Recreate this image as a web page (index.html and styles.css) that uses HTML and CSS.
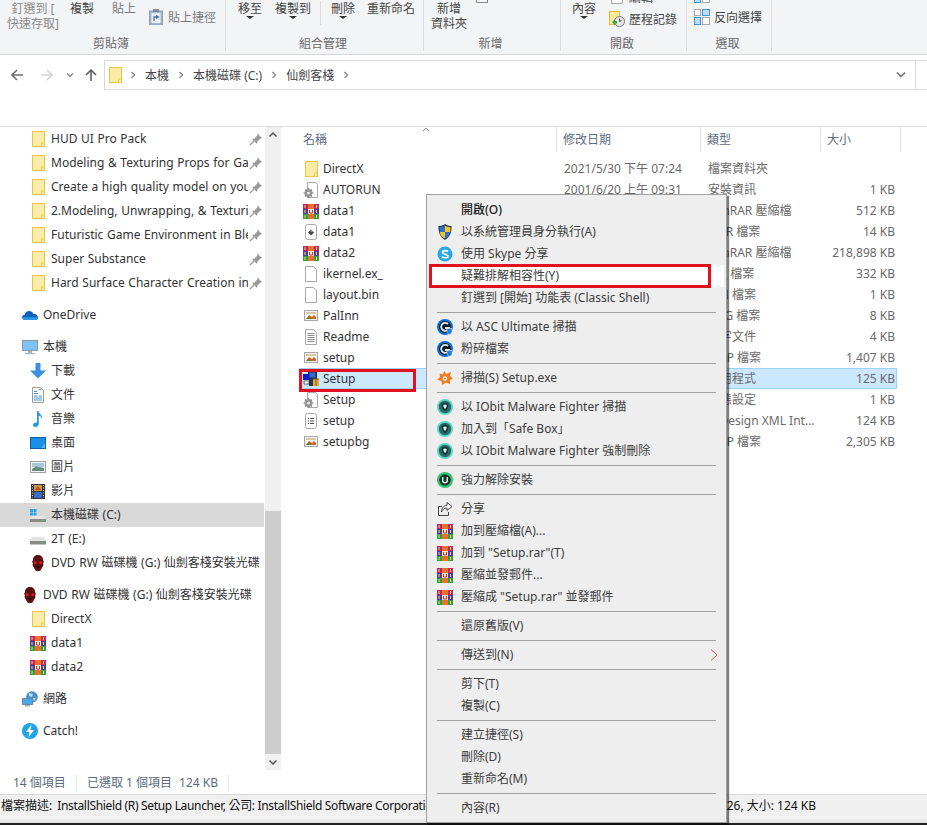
FILE: index.html
```html
<!DOCTYPE html>
<html lang="zh-Hant">
<head>
  <meta charset="UTF-8" />
  <title>仙劍客棧</title>
  <link rel="stylesheet" href="styles.css">
</head>
<body>
  <svg class="defs" xmlns="http://www.w3.org/2000/svg">
    <symbol id="folder" viewBox="0 0 16 16"><rect x="2.5" y="0.5" width="12" height="15" fill="#fdeca6" stroke="#ecc546"/><path d="M11.5 15v-3h3" fill="#fff6c8" stroke="#ecc546"/></symbol>
    <symbol id="rar" viewBox="0 0 16 16"><rect x="0" y="1" width="5" height="5" fill="#c2206a"/><rect x="5" y="1" width="6" height="5" fill="#e2722c"/><rect x="11" y="1" width="5" height="5" fill="#d0245e"/><rect x="0" y="6" width="5" height="5" fill="#4a3da6"/><rect x="5" y="6" width="6" height="5" fill="#f3e3d0"/><rect x="11" y="6" width="5" height="5" fill="#4a3da6"/><rect x="0" y="11" width="5" height="5" fill="#2f9e44"/><rect x="5" y="11" width="6" height="5" fill="#e2722c"/><rect x="11" y="11" width="5" height="5" fill="#2f9e44"/><path d="M6.5 7v3h3V7" fill="none" stroke="#c0392b"/><path d="M2 2v3M2 7v3M2 12v3M13.500 2v3M13.500 7v3M13.500 12v3" stroke="#f4e04d"/></symbol>
    <symbol id="docgear" viewBox="0 0 16 16"><path d="M4.500 .5h8l2 2v13h-10z" fill="#fff" stroke="#a8a8a8"/><circle cx="5.500" cy="11" r="4" fill="#a0a0a0"/><circle cx="5.500" cy="11" r="1.600" fill="#e8e8e8"/><path d="M5.500 6v10M.5 11h10M2 7.500l7 7M9 7.500l-7 7" stroke="#8c8c8c" stroke-width="1.200"/><circle cx="5.500" cy="11" r="1.600" fill="#e8e8e8"/></symbol>
    <symbol id="docdark" viewBox="0 0 16 16"><rect x="2.500" y=".5" width="11" height="15" rx="2" fill="#fff" stroke="#a8a8a8"/><path d="M5 8.500l3-3 3 3-3 3z" fill="#444"/><path d="M8 5.500l2 2-2 1z" fill="#999"/></symbol>
    <symbol id="docblank" viewBox="0 0 16 16"><path d="M2.500 .5h8l3 3v12h-11z" fill="#fff" stroke="#a8a8a8"/></symbol>
    <symbol id="doctext" viewBox="0 0 16 16"><path d="M2.500 .5h8l3 3v12h-11z" fill="#fff" stroke="#a8a8a8"/><path d="M4.500 4.500h7M4.500 6.500h7M4.500 8.500h7M4.500 10.500h7M4.500 12.500h7" stroke="#8a8a8a"/></symbol>
    <symbol id="doclist" viewBox="0 0 16 16"><rect x="2.500" y=".5" width="11" height="15" rx="2" fill="#fff" stroke="#a8a8a8"/><path d="M5 5.500h1M5 8h1M5 10.500h1M7 5.500h4M7 8h4M7 10.500h4" stroke="#444"/></symbol>
    <symbol id="bmp" viewBox="0 0 16 16"><rect x="1.500" y="2.500" width="13" height="10" fill="#f4f4f4" stroke="#a8a8a8"/><path d="M3 11l3-4 3 2 2-2 2 2v2z" fill="#d9622b"/><path d="M3 11l3-2 3 2z" fill="#4a8a4a"/><rect x="3" y="4" width="10" height="2" fill="#d8c9a0"/></symbol>
    <symbol id="setup" viewBox="0 0 16 16"><rect x="5" y="0" width="9" height="8" fill="#1d2a55"/><rect x="6.500" y="1.500" width="6" height="5" fill="#2c6fd1"/><rect x="0" y="3" width="6" height="6" fill="#0a1ed0"/><path d="M1 10h5v3H1z" fill="#fff" stroke="#333" stroke-width=".7"/><rect x="6" y="8" width="4" height="7" fill="#26344f"/><rect x="10" y="8" width="6" height="7" fill="#e2a93b"/><path d="M10 8h6M13 8v7" stroke="#8a5a12"/></symbol>
    <symbol id="pin" viewBox="0 0 16 16"><path d="M9 2l5 5-1.500.5-3 3-.5 2.500-5-5 2.500-.5 3-3z" fill="#9a9a9a"/><path d="M6 10l-4 4" stroke="#9a9a9a" stroke-width="1.200"/></symbol>
    <symbol id="cloud" viewBox="0 0 16 16"><path d="M3.500 13C1.500 13 0 11.700 0 10.200 0 8.700 1.300 7.700 2.700 7.700 3.300 5.600 5 4 7.200 4c1.900 0 3.400 1 4.100 2.700C13.700 6.700 16 8.300 16 10.500c0 1.500-1 2.500-2.500 2.500z" fill="#0f62b8"/><path d="M3.500 13c-2 0-3.500-1.300-3.500-2.800h16c0 1.800-1 2.800-2.500 2.800z" fill="#2a9be8"/></symbol>
    <symbol id="pc" viewBox="0 0 16 16"><rect x=".5" y="1.500" width="15" height="10" fill="#7cc4f2" stroke="#8a9aa8"/><rect x="6" y="12" width="4" height="2" fill="#a8b4be"/><rect x="3" y="14" width="10" height="1.200" fill="#a8b4be"/></symbol>
    <symbol id="down" viewBox="0 0 16 16"><path d="M5.500 0h5v7.500H16L8 15.500 0 7.500h5.500z" fill="#3c8ee0"/></symbol>
    <symbol id="docs" viewBox="0 0 16 16"><path d="M2.500 .5h8l3 3v12h-11z" fill="#fff" stroke="#9a9a9a"/><path d="M4 4.500h3M4 6.500h4M9 9h3M4 9h4M4 11h8M4 13h8" stroke="#3f93e0"/><path d="M8.500 2.500h3" stroke="#8a8a8a"/></symbol>
    <symbol id="music" viewBox="0 0 16 16"><path d="M7 0h1.500c.3 3 4 3.500 3.500 8-.5-2-2-3-3.200-3.200V13c0 1.700-1.600 3-3.300 3S3 15 3 13.700s1.500-2.400 4-2.200z" fill="#2a97ee"/></symbol>
    <symbol id="desk" viewBox="0 0 16 16"><rect x=".5" y="2.500" width="15" height="11" fill="#1a8fe8" stroke="#0a5fa8"/><path d="M12 12l3-4v5h-3z" fill="#5db8f5"/></symbol>
    <symbol id="pics" viewBox="0 0 16 16"><rect x=".5" y="2.500" width="15" height="11" fill="#eef4f6" stroke="#a0a0a0"/><rect x="2" y="4" width="12" height="4" fill="#a8c8d8"/><path d="M2 10l4-2.500 8 1.500v3H2z" fill="#5f8f78"/></symbol>
    <symbol id="film" viewBox="0 0 16 16"><rect x="1" y="1" width="14" height="15" fill="#333"/><rect x="4" y="2" width="8" height="6" fill="#c99a3a"/><rect x="4" y="9" width="8" height="6" fill="#3a6fc9"/><path d="M2.500 2v13M13.500 2v13" stroke="#ccc" stroke-dasharray="1 1.500"/><path d="M5 7l3-4 3 4z" fill="#c0442a"/></symbol>
    <symbol id="drivewin" viewBox="0 0 16 16"><rect x="0" y="2" width="3" height="3" fill="#2aa0ee"/><rect x="3.500" y="2" width="3" height="3" fill="#2aa0ee"/><rect x="0" y="5.500" width="3" height="3" fill="#2aa0ee"/><rect x="3.500" y="5.500" width="3" height="3" fill="#2aa0ee"/><path d="M2 9h12l2 3v3H0v-3z" fill="#e4e4e4"/><rect x="0" y="12" width="16" height="3" fill="#8a8a8a"/><rect x="11" y="13" width="2" height="1" fill="#3fd05a"/></symbol>
    <symbol id="drive" viewBox="0 0 16 16"><path d="M2 6h12l2 3v4H0V9z" fill="#e4e4e4"/><rect x="0" y="10" width="16" height="3.500" fill="#8a8a8a"/><rect x="11" y="11" width="2" height="1" fill="#3fd05a"/></symbol>
    <symbol id="mask" viewBox="0 0 16 16"><path d="M8 0c3 0 5 2 5 5l1 2-1 1 .5 2-1.500 3-2 3H6l-2-3-1.500-3L3 8 2 7l1-2c0-3 2-5 5-5z" fill="#5a1010"/><path d="M4 6l3 1-1 2H4zM12 6l-3 1 1 2h2z" fill="#e01818"/><path d="M6 11h4l-1 2H7z" fill="#2a0505"/></symbol>
    <symbol id="net" viewBox="0 0 16 16"><circle cx="10" cy="6" r="5.800" fill="#4a90c8"/><path d="M7 2l4 1-1 3-3-1zM11 7l3 0-2 3z" fill="#bcdcf0"/><rect x=".5" y="7.500" width="10" height="6" fill="#4aa8e8" stroke="#6a8aa0"/><rect x="3" y="14" width="5" height="1.500" fill="#a0aeb8"/></symbol>
    <symbol id="bolt" viewBox="0 0 16 16"><circle cx="8" cy="8" r="8" fill="#1fa4ea"/><path d="M9.500 1.500L4 9h3.500l-1 5.500L12 7H8.500z" fill="#fff"/></symbol>
    <symbol id="uac" viewBox="0 0 16 16"><path d="M8 0c2 1.500 4 2 6.500 2 .3 6-1.500 11-6.500 14C3 13 1.200 8 1.500 2 4 2 6 1.500 8 0z" fill="#1f3a60"/><path d="M8 1.500V8H2.700c-.1-1.700-.1-3.200 0-5C4.700 3 6.400 2.500 8 1.500zM8 8h5.300c-.5 3-2.300 5.300-5.300 6.500z" fill="#2f6fc4"/><path d="M8 1.500c1.600 1 3.300 1.500 5.300 1.500.1 1.800.1 3.300 0 5H8zM8 8v6.500C5 13.300 3.200 11 2.700 8z" fill="#f4c22a"/></symbol>
    <symbol id="skype" viewBox="0 0 16 16"><circle cx="8" cy="8" r="7.500" fill="#2aa8e8"/><path d="M11 5.500C10 4.300 5.500 4.200 5.500 6.300S11 8 11 10.200 6 12 5 10.500" fill="none" stroke="#fff" stroke-width="1.700"/></symbol>
    <symbol id="asc" viewBox="0 0 16 16"><circle cx="8" cy="8" r="8" fill="#0a6fd8"/><circle cx="8" cy="8" r="6" fill="#101820"/><path d="M11 5a4 4 0 1 0 1 4H8" fill="none" stroke="#dfeaf5" stroke-width="1.800"/><path d="M10 9.500h5v3c0 1.500-1.500 2.500-2.500 3-1-.5-2.500-1.500-2.500-3z" fill="#1a7ae0" stroke="#fff" stroke-width=".5"/></symbol>
    <symbol id="avast" viewBox="0 0 16 16"><path d="M7 1l2.500 3L14 2l-1 4 3 2.500-3 1.500 0 4-4-1.500-4 2.500-.5-4L0 9.500 3 7 2.500 3.500 6 4.500z" fill="#f47b20"/><circle cx="8" cy="8.500" r="2.200" fill="#fff"/><circle cx="8" cy="8.500" r="1" fill="#f47b20"/></symbol>
    <symbol id="iobit" viewBox="0 0 16 16"><circle cx="8" cy="8" r="8" fill="#58d8c0"/><circle cx="8" cy="8" r="6.200" fill="#2a6a6a"/><path d="M8 3.500l3.500 1.200c0 3.300-1 6-3.500 7.500-2.500-1.500-3.500-4.200-3.500-7.500z" fill="#153838"/><path d="M8 5.500l1.700.6c0 1.500-.5 3-1.700 3.800-1.200-.8-1.700-2.300-1.700-3.800z" fill="#d6f5ee"/></symbol>
    <symbol id="uninst" viewBox="0 0 16 16"><circle cx="8" cy="8" r="8" fill="#2fc46a"/><circle cx="8" cy="8" r="5.700" fill="#12342a"/><path d="M5.700 5v3.500a2.300 2.300 0 0 0 4.600 0V5" fill="none" stroke="#d8f5e2" stroke-width="1.500"/></symbol>
    <symbol id="share" viewBox="0 0 16 16"><path d="M5 5.500H1.500v9h10V11" fill="none" stroke="#444"/><path d="M10 1.500l5 4-5 4V7C7 7 5.500 8.500 4.500 11c0-4 2-6.500 5.500-6.500z" fill="#fff" stroke="#444"/></symbol>
    <symbol id="paste" viewBox="0 0 16 16"><rect x="1.500" y="2" width="13" height="14" fill="#a6b8c8" stroke="#8a9cae"/><rect x="5" y="0" width="6" height="3" fill="#7d8c9a"/><rect x="3.500" y="4" width="9" height="10" fill="#e8eef4"/><path d="M6 12V8h4M8 6.500L10.500 8 8 9.500" fill="none" stroke="#4a78a8" stroke-width="1.300"/></symbol>
    <symbol id="history" viewBox="0 0 16 16"><rect x=".5" y=".5" width="10" height="13" fill="#fde99a" stroke="#e0bc3c"/><circle cx="10.500" cy="10.500" r="5" fill="#e8e8e8" stroke="#777"/><path d="M10.500 7.500v3l2-1" fill="none" stroke="#444"/><path d="M3 11l3-3v2h2v2.500H6v2z" fill="#2fae3f"/></symbol>
    <symbol id="invert" viewBox="0 0 16 16"><rect x=".5" y=".5" width="6" height="6" fill="#fff" stroke="#a8a8a8"/><rect x="8.500" y=".5" width="7" height="6" fill="#bcdcf8" stroke="#3c94e0"/><rect x=".5" y="8.500" width="6" height="7" fill="#bcdcf8" stroke="#3c94e0"/><rect x="8.500" y="8.500" width="7" height="7" fill="#fff" stroke="#a8a8a8"/></symbol>
    <symbol id="chev" viewBox="0 0 8 8"><path d="M2.500 1l3 3-3 3" fill="none" stroke="#8a8a8a" stroke-width="1.400"/></symbol>
  </svg>

  <header class="ribbon">
    <section class="group group-clip">
      <div class="tools">
        <div class="tool tool-pin">釘選到 [<br>快速存取]</div>
        <div class="tool tool-copy">複製</div>
        <div class="tool tool-paste">貼上</div>
        <div class="tool-row tool-link"><svg class="ico"><use href="#paste"/></svg>貼上捷徑</div>
      </div>
      <div class="label">剪貼簿</div>
    </section>
    <section class="group group-org">
      <div class="tools">
        <div class="tool">移至<i class="caret"></i></div>
        <div class="tool">複製到<i class="caret"></i></div>
        <div class="tool-sep"></div>
        <div class="tool">刪除<i class="caret"></i></div>
        <div class="tool">重新命名</div>
      </div>
      <div class="label">組合管理</div>
    </section>
    <section class="group group-new">
      <div class="tools">
        <div class="tool">新增<br>資料夾</div>
        <div class="mini-box"></div>
      </div>
      <div class="label">新增</div>
    </section>
    <section class="group group-open">
      <div class="tools">
        <div class="tool">內容<i class="caret"></i></div>
        <div class="stack stack-open">
          <div class="tool-row"><svg class="ico ico-edit"><use href="#docblank"/></svg>編輯</div>
          <div class="tool-row"><svg class="ico"><use href="#history"/></svg>歷程記錄</div>
        </div>
      </div>
      <div class="label">開啟</div>
    </section>
    <section class="group group-select">
      <div class="tools">
        <div class="stack stack-select">
          <div class="tool-row"><svg class="ico"><use href="#invert"/></svg></div>
          <div class="tool-row"><svg class="ico"><use href="#invert"/></svg>反向選擇</div>
        </div>
      </div>
      <div class="label">選取</div>
    </section>
  </header>

  <div class="address-row">
    <div class="nav-btns">
      <svg class="arrow arrow-back" viewBox="0 0 12 12"><path d="M12 6H1M6 1L1 6l5 5" fill="none" stroke="#707070" stroke-width="1.600"/></svg>
      <svg class="arrow arrow-fwd" viewBox="0 0 12 12"><path d="M0 6h11M6 1l5 5-5 5" fill="none" stroke="#d4d4d4" stroke-width="1.600"/></svg>
      <svg class="arrow-small" viewBox="0 0 8 8"><path d="M1 2.500l3 3 3-3" fill="none" stroke="#8a8a8a" stroke-width="1.300"/></svg>
      <svg class="arrow arrow-up" viewBox="0 0 12 12"><path d="M6 12V1M1 6l5-5 5 5" fill="none" stroke="#606060" stroke-width="1.600"/></svg>
    </div>
    <div class="address">
      <svg class="ico ico-addr"><use href="#folder"/></svg>
      <svg class="crumb-chev"><use href="#chev"/></svg>
      <span>本機</span>
      <svg class="crumb-chev"><use href="#chev"/></svg>
      <span>本機磁碟 (C:)</span>
      <svg class="crumb-chev"><use href="#chev"/></svg>
      <span>仙劍客棧</span>
      <svg class="crumb-chev"><use href="#chev"/></svg>
      <svg class="address-drop" viewBox="0 0 10 8"><path d="M1 1.500l4 4 4-4" fill="none" stroke="#707070" stroke-width="1.600"/></svg>
    </div>
    <div class="search-box"></div>
  </div>

  <main class="main">
    <nav class="sidebar">
      <div class="nav-group">
        <div class="nav-row sub"><svg class="ico"><use href="#folder"/></svg><span class="nav-name">HUD UI Pro Pack</span><svg class="pin"><use href="#pin"/></svg></div>
        <div class="nav-row sub"><svg class="ico"><use href="#folder"/></svg><span class="nav-name">Modeling &amp; Texturing Props for Games</span><svg class="pin"><use href="#pin"/></svg></div>
        <div class="nav-row sub"><svg class="ico"><use href="#folder"/></svg><span class="nav-name">Create a high quality model on your own</span><svg class="pin"><use href="#pin"/></svg></div>
        <div class="nav-row sub"><svg class="ico"><use href="#folder"/></svg><span class="nav-name">2.Modeling, Unwrapping, &amp; Texturing</span><svg class="pin"><use href="#pin"/></svg></div>
        <div class="nav-row sub"><svg class="ico"><use href="#folder"/></svg><span class="nav-name">Futuristic Game Environment in Blender</span><svg class="pin"><use href="#pin"/></svg></div>
        <div class="nav-row sub"><svg class="ico"><use href="#folder"/></svg><span class="nav-name">Super Substance</span><svg class="pin"><use href="#pin"/></svg></div>
        <div class="nav-row sub"><svg class="ico"><use href="#folder"/></svg><span class="nav-name">Hard Surface Character Creation in Blender</span><svg class="pin"><use href="#pin"/></svg></div>
      </div>
      <div class="nav-group">
        <div class="nav-row"><svg class="ico"><use href="#cloud"/></svg><span class="nav-name">OneDrive</span></div>
      </div>
      <div class="nav-group">
        <div class="nav-row"><svg class="ico"><use href="#pc"/></svg><span class="nav-name">本機</span></div>
        <div class="nav-row sub"><svg class="ico"><use href="#down"/></svg><span class="nav-name">下載</span></div>
        <div class="nav-row sub"><svg class="ico"><use href="#docs"/></svg><span class="nav-name">文件</span></div>
        <div class="nav-row sub"><svg class="ico"><use href="#music"/></svg><span class="nav-name">音樂</span></div>
        <div class="nav-row sub"><svg class="ico"><use href="#desk"/></svg><span class="nav-name">桌面</span></div>
        <div class="nav-row sub"><svg class="ico"><use href="#pics"/></svg><span class="nav-name">圖片</span></div>
        <div class="nav-row sub"><svg class="ico"><use href="#film"/></svg><span class="nav-name">影片</span></div>
        <div class="nav-row sub active"><svg class="ico"><use href="#drivewin"/></svg><span class="nav-name">本機磁碟 (C:)</span></div>
        <div class="nav-row sub"><svg class="ico"><use href="#drive"/></svg><span class="nav-name">2T (E:)</span></div>
        <div class="nav-row sub"><svg class="ico"><use href="#mask"/></svg><span class="nav-name">DVD RW 磁碟機 (G:) 仙劍客棧安裝光碟</span></div>
      </div>
      <div class="nav-group">
        <div class="nav-row"><svg class="ico"><use href="#mask"/></svg><span class="nav-name">DVD RW 磁碟機 (G:) 仙劍客棧安裝光碟</span></div>
        <div class="nav-row sub"><svg class="ico"><use href="#folder"/></svg><span class="nav-name">DirectX</span></div>
        <div class="nav-row sub"><svg class="ico"><use href="#rar"/></svg><span class="nav-name">data1</span></div>
        <div class="nav-row sub"><svg class="ico"><use href="#rar"/></svg><span class="nav-name">data2</span></div>
      </div>
      <div class="nav-group">
        <div class="nav-row"><svg class="ico"><use href="#net"/></svg><span class="nav-name">網路</span></div>
      </div>
      <div class="nav-group">
        <div class="nav-row"><svg class="ico"><use href="#bolt"/></svg><span class="nav-name">Catch!</span></div>
      </div>
    </nav>

    <div class="scrollbar">
      <svg class="sb-btn" viewBox="0 0 16 16"><path d="M4.500 9.500L8 6l3.500 3.500" fill="none" stroke="#555" stroke-width="1.500"/></svg>
      <div class="sb-track"></div>
      <div class="sb-thumb"></div>
      <svg class="sb-btn" viewBox="0 0 16 16"><path d="M4.500 6.500L8 10l3.500-3.500" fill="none" stroke="#555" stroke-width="1.500"/></svg>
    </div>

    <section class="files">
      <div class="file-head">
        <div class="head-cell head-name">名稱<svg class="sort" viewBox="0 0 8 5"><path d="M1 4l3-3 3 3" fill="none" stroke="#8a8a8a"/></svg></div>
        <div class="head-cell">修改日期</div>
        <div class="head-cell">類型</div>
        <div class="head-cell">大小</div>
      </div>
      <div class="file-row"><div class="f-name"><svg class="ico"><use href="#folder"/></svg>DirectX</div><div class="f-cell">2021/5/30 下午 07:24</div><div class="f-cell">檔案資料夾</div><div class="f-size"></div></div>
      <div class="file-row"><div class="f-name"><svg class="ico"><use href="#docgear"/></svg>AUTORUN</div><div class="f-cell">2001/6/20 上午 09:31</div><div class="f-cell">安裝資訊</div><div class="f-size">1 KB</div></div>
      <div class="file-row"><div class="f-name"><svg class="ico"><use href="#rar"/></svg>data1</div><div class="f-cell"></div><div class="f-cell">WinRAR 壓縮檔</div><div class="f-size">512 KB</div></div>
      <div class="file-row"><div class="f-name"><svg class="ico"><use href="#docdark"/></svg>data1</div><div class="f-cell"></div><div class="f-cell">HDR 檔案</div><div class="f-size">14 KB</div></div>
      <div class="file-row"><div class="f-name"><svg class="ico"><use href="#rar"/></svg>data2</div><div class="f-cell"></div><div class="f-cell">WinRAR 壓縮檔</div><div class="f-size">218,898 KB</div></div>
      <div class="file-row"><div class="f-name"><svg class="ico"><use href="#docblank"/></svg>ikernel.ex_</div><div class="f-cell"></div><div class="f-cell">EX_ 檔案</div><div class="f-size">332 KB</div></div>
      <div class="file-row"><div class="f-name"><svg class="ico"><use href="#docblank"/></svg>layout.bin</div><div class="f-cell"></div><div class="f-cell">BIN 檔案</div><div class="f-size">1 KB</div></div>
      <div class="file-row"><div class="f-name"><svg class="ico"><use href="#bmp"/></svg>PalInn</div><div class="f-cell"></div><div class="f-cell">PNG 檔案</div><div class="f-size">8 KB</div></div>
      <div class="file-row"><div class="f-name"><svg class="ico"><use href="#doctext"/></svg>Readme</div><div class="f-cell"></div><div class="f-cell">文字文件</div><div class="f-size">4 KB</div></div>
      <div class="file-row"><div class="f-name"><svg class="ico"><use href="#bmp"/></svg>setup</div><div class="f-cell"></div><div class="f-cell">BMP 檔案</div><div class="f-size">1,407 KB</div></div>
      <div class="file-row selected"><div class="f-name"><svg class="ico"><use href="#setup"/></svg>Setup</div><div class="f-cell"></div><div class="f-cell">應用程式</div><div class="f-size">125 KB</div></div>
      <div class="file-row"><div class="f-name"><svg class="ico"><use href="#docgear"/></svg>Setup</div><div class="f-cell"></div><div class="f-cell">組態設定</div><div class="f-size">1 KB</div></div>
      <div class="file-row"><div class="f-name"><svg class="ico"><use href="#doclist"/></svg>setup</div><div class="f-cell"></div><div class="f-cell">InDesign XML Int...</div><div class="f-size">124 KB</div></div>
      <div class="file-row"><div class="f-name"><svg class="ico"><use href="#bmp"/></svg>setupbg</div><div class="f-cell"></div><div class="f-cell">BMP 檔案</div><div class="f-size">2,305 KB</div></div>
    </section>
  </main>

  <div class="status">
    <span class="status-count">14 個項目</span>
    <span class="status-sel">已選取 1 個項目</span>
    <span class="status-size">124 KB</span>
  </div>
  <div class="tipbar">
    <span class="tip-left"><span class="tip-key">檔案描述:</span>InstallShield (R) Setup Launcher, 公司: InstallShield Software Corporation, 檔案版本: 5.50</span>
    <span>:26, 大小: 124 KB</span>
  </div>
  <div class="foot"></div>
  <div class="taskbar"></div>

  <div class="mark mark-file"></div>

  <div class="menu">
    <div class="item item-default">開啟(O)</div>
    <div class="item"><svg class="ico"><use href="#uac"/></svg>以系統管理員身分執行(A)</div>
    <div class="item"><svg class="ico"><use href="#skype"/></svg>使用 Skype 分享</div>
    <div class="item item-mark">疑難排解相容性(Y)</div>
    <div class="item">釘選到 [開始] 功能表 (Classic Shell)</div>
    <hr class="sep">
    <div class="item"><svg class="ico"><use href="#asc"/></svg>以 ASC Ultimate 掃描</div>
    <div class="item"><svg class="ico"><use href="#asc"/></svg>粉碎檔案</div>
    <hr class="sep">
    <div class="item"><svg class="ico"><use href="#avast"/></svg>掃描(S) Setup.exe</div>
    <hr class="sep">
    <div class="item"><svg class="ico"><use href="#iobit"/></svg>以 IObit Malware Fighter 掃描</div>
    <div class="item"><svg class="ico"><use href="#iobit"/></svg>加入到「Safe Box」</div>
    <div class="item"><svg class="ico"><use href="#iobit"/></svg>以 IObit Malware Fighter 強制刪除</div>
    <hr class="sep">
    <div class="item"><svg class="ico"><use href="#uninst"/></svg>強力解除安裝</div>
    <hr class="sep">
    <div class="item"><svg class="ico"><use href="#share"/></svg>分享</div>
    <div class="item"><svg class="ico"><use href="#rar"/></svg>加到壓縮檔(A)...</div>
    <div class="item"><svg class="ico"><use href="#rar"/></svg>加到 "Setup.rar"(T)</div>
    <div class="item"><svg class="ico"><use href="#rar"/></svg>壓縮並發郵件...</div>
    <div class="item"><svg class="ico"><use href="#rar"/></svg>壓縮成 "Setup.rar" 並發郵件</div>
    <hr class="sep">
    <div class="item">還原舊版(V)</div>
    <hr class="sep">
    <div class="item">傳送到(N)<svg class="submenu" viewBox="0 0 8 12"><path d="M1 .5L7 6l-6 5.500" fill="none" stroke="#c0605a" stroke-width="1"/></svg></div>
    <hr class="sep">
    <div class="item">剪下(T)</div>
    <div class="item">複製(C)</div>
    <hr class="sep">
    <div class="item">建立捷徑(S)</div>
    <div class="item">刪除(D)</div>
    <div class="item">重新命名(M)</div>
    <hr class="sep">
    <div class="item">內容(R)</div>
  </div>
  <div class="mark mark-menu"></div>
</body>
</html>
```

FILE: styles.css
```css
:root {
  --ui-font: "Noto Sans", "Noto Sans CJK TC", sans-serif;
  --line: #dcdcdc;
  --text: #333;
  --muted: #6a6a6a;
  --slate: #5c6c7e;
  --mark: #e3101f;
}

* {
  box-sizing: border-box;
}

body {
  margin: 0;
  width: 927px;
  height: 825px;
  overflow: hidden;
  position: relative;
  display: flex;
  flex-direction: column;
  background: #fff;
  font-family: var(--ui-font);
  font-size: 12px;
  line-height: 15px;
  color: var(--text);
}

.defs {
  position: absolute;
  width: 0;
  height: 0;
}

.ico {
  width: 16px;
  height: 16px;
  flex: none;
}

/* ribbon */
.ribbon {
  display: flex;
  height: 55px;
  flex: none;
  overflow: hidden;
  background: #f3f4f6;
  border-bottom: 1px solid #d6d6d6;
}

.group {
  height: 51px;
  display: flex;
  flex-direction: column;
  border-right: 1px solid var(--line);
}

.tools {
  height: 36px;
  display: flex;
  align-items: flex-start;
  padding-top: 1px;
}

.label {
  text-align: center;
  color: var(--muted);
  padding-right: 3px;
}

.tool {
  display: flex;
  flex-direction: column;
  align-items: center;
  text-align: center;
  white-space: nowrap;
  color: #444;
}

.tool-row {
  display: flex;
  align-items: center;
  gap: 4px;
  height: 22px;
  color: #444;
}

.caret {
  width: 0;
  height: 0;
  border-left: 4px solid transparent;
  border-right: 4px solid transparent;
  border-top: 3px solid #333;
}

.group-clip {
  width: 226px;
}

.group-clip .tools {
  padding-left: 6px;
}

.tool-pin {
  display: block;
  width: 54px;
  color: #8a8a8a;
}

.tool-copy {
  margin-left: 10px;
}

.tool-paste {
  margin-left: 18px;
  color: #7a7a7a;
}

.tool-link {
  margin: 5px 0 0 12px;
  color: #7a7a7a;
}

.group-org {
  width: 198px;
}

.group-org .tools {
  gap: 13px;
  padding-left: 12px;
}

.group-org .tool:last-child {
  margin-left: -1px;
}

.tool-sep {
  width: 1px;
  height: 24px;
  margin: 0 -3px 0 -4px;
  background: var(--line);
}

.group-new {
  width: 137px;
}

.group-new .tools {
  padding-left: 7px;
}

.mini-box {
  width: 12px;
  height: 3px;
  margin: -1px 0 0 9px;
  background: #fff;
  border: 1px solid #8a8a8a;
  border-top: 0;
}

.group-open {
  width: 126px;
}

.group-open .tools {
  padding-left: 11px;
}

.stack {
  display: flex;
  flex-direction: column;
  margin-left: 13px;
}

.stack-open {
  margin-top: -15px;
}

.ico-edit {
  margin-top: -3px;
}

.group-select {
  width: 85px;
}

.group-select .tools {
  padding-left: 7px;
}

.stack-select {
  margin: -17px 0 0 0;
}

/* address bar */
.address-row {
  height: 72px;
  flex: none;
  display: flex;
  align-items: flex-start;
  padding-top: 5px;
  border-bottom: 1px solid var(--line);
}

.nav-btns {
  width: 104px;
  height: 30px;
  display: flex;
  align-items: center;
  padding-left: 11px;
  flex: none;
}

.arrow {
  width: 12px;
  height: 12px;
  flex: none;
}

.arrow-fwd {
  margin-left: 18px;
}

.arrow-small {
  width: 8px;
  height: 8px;
  margin-left: 13px;
  flex: none;
}

.arrow-up {
  margin-left: 11px;
}

.address {
  width: 812px;
  height: 30px;
  flex: none;
  display: flex;
  align-items: center;
  border: 1px solid #d9d9d9;
  padding-left: 2px;
  color: #444;
}

.crumb-chev {
  width: 8px;
  height: 8px;
  flex: none;
  margin: 0 8px;
}

.ico-addr + .crumb-chev {
  margin: 0 8px 0 6px;
}

.address-drop {
  width: 10px;
  height: 8px;
  margin-left: auto;
  margin-right: 9px;
}

.search-box {
  flex: 1;
  height: 30px;
  border: solid #d9d9d9;
  border-width: 1px 0;
}

/* main */
.main {
  height: 643px;
  flex: none;
  display: flex;
}

.sidebar {
  width: 265px;
  flex: none;
}

.nav-group {
  margin-bottom: 8px;
}

.nav-row {
  width: 264px;
  height: 24px;
  display: flex;
  align-items: center;
  gap: 5px;
  padding-left: 22px;
  color: #333;
}

.nav-row.sub {
  padding-left: 30px;
}

.nav-row.active {
  background: #d9d9d9;
}

.nav-name {
  flex: 1;
  min-width: 0;
  margin-bottom: 2px;
  overflow: hidden;
  white-space: nowrap;
  word-spacing: 0.5px;
}

.pin {
  width: 16px;
  height: 16px;
  flex: none;
  margin-left: -5px;
}

.scrollbar {
  width: 16px;
  flex: none;
  display: flex;
  flex-direction: column;
  background: #f0f0f0;
}

.sb-btn {
  width: 16px;
  height: 16px;
  flex: none;
}

.sb-track {
  flex: 1;
}

.sb-thumb {
  height: 243px;
  flex: none;
  background: #cdcdcd;
}

.files {
  flex: 1;
  padding-left: 18px;
}

.file-head,
.file-row {
  display: grid;
  grid-template-columns: 258px 144px 120px 76px;
  width: 598px;
}

.file-head {
  height: 31px;
  grid-template-columns: 258px 144px 120px 80px;
  width: 602px;
  align-items: start;
}

.head-cell {
  height: 25px;
  padding: 5px 0 0 6px;
  border-right: 1px solid #e5e5e5;
  color: var(--slate);
  position: relative;
}

.head-name {
  padding-left: 4px;
}

.sort {
  position: absolute;
  left: 123px;
  top: 0;
  width: 8px;
  height: 5px;
}

.file-row {
  height: 21px;
  align-items: center;
  border: 1px solid transparent;
}

.file-row.selected {
  background: #cce8ff;
  border-color: #99d1ff;
}

.f-name {
  display: flex;
  align-items: center;
  gap: 4px;
  padding-left: 3px;
  color: #333;
}

.f-cell {
  padding-left: 6px;
  color: var(--muted);
  white-space: nowrap;
}

.f-size {
  padding-right: 3px;
  text-align: right;
  color: var(--muted);
}

/* bottom bars */
.status {
  height: 24px;
  flex: none;
  display: flex;
  align-items: center;
  padding: 1px 0 0 13px;
  color: var(--slate);
}

.status-count {
  width: 64px;
  height: 16px;
  border-right: 1px solid #e8e8e8;
}

.status-sel {
  margin-left: 10px;
}

.status-size {
  margin-left: 7px;
  padding-right: 10px;
  height: 16px;
  border-right: 1px solid #e8e8e8;
}

.tipbar {
  height: 22px;
  flex: none;
  display: flex;
  justify-content: space-between;
  align-items: center;
  width: 927px;
  padding: 0 111px 0 1px;
  background: #f0f0f0;
  border-top: 1px solid #d8d8d8;
  color: #111;
  white-space: nowrap;
  overflow: hidden;
}

.tip-left {
  letter-spacing: -0.33px;
}

.tip-key {
  letter-spacing: 0;
  margin-right: 5px;
}

.foot {
  height: 7px;
  flex: none;
  background: linear-gradient(#f8f8f8, #e2e2e2);
}

.taskbar {
  height: 2px;
  flex: none;
  background: #222;
}

/* context menu */
.menu {
  position: absolute;
  left: 426px;
  top: 194px;
  width: 301px;
  height: 629px;
  padding: 4px 2px;
  background: #eee;
  border: 1px solid #a0a0a0;
  box-shadow: 2px 2px 1px rgba(0, 0, 0, 0.5);
  color: #3c3c3c;
}

.item {
  height: 22px;
  display: flex;
  align-items: center;
  padding: 0 0 2px 32px;
  position: relative;
  white-space: nowrap;
}

.item .ico {
  position: absolute;
  left: 8px;
  top: 3px;
}

.item-default {
  font-weight: 500;
  color: #222;
}

.item-mark {
  background: #fff;
}

.sep {
  height: 1px;
  margin: 3px 8px 3px 8px;
  border: 0;
  background: #a0a0a0;
}

.submenu {
  position: absolute;
  right: 6px;
  top: 5px;
  width: 8px;
  height: 12px;
}

/* red marks drawn over the shot */
.mark {
  position: absolute;
  border: 3px solid var(--mark);
}

.mark-file {
  left: 299px;
  top: 369px;
  width: 117px;
  height: 23px;
}

.mark-menu {
  left: 429px;
  top: 264px;
  width: 282px;
  height: 24px;
}
```
